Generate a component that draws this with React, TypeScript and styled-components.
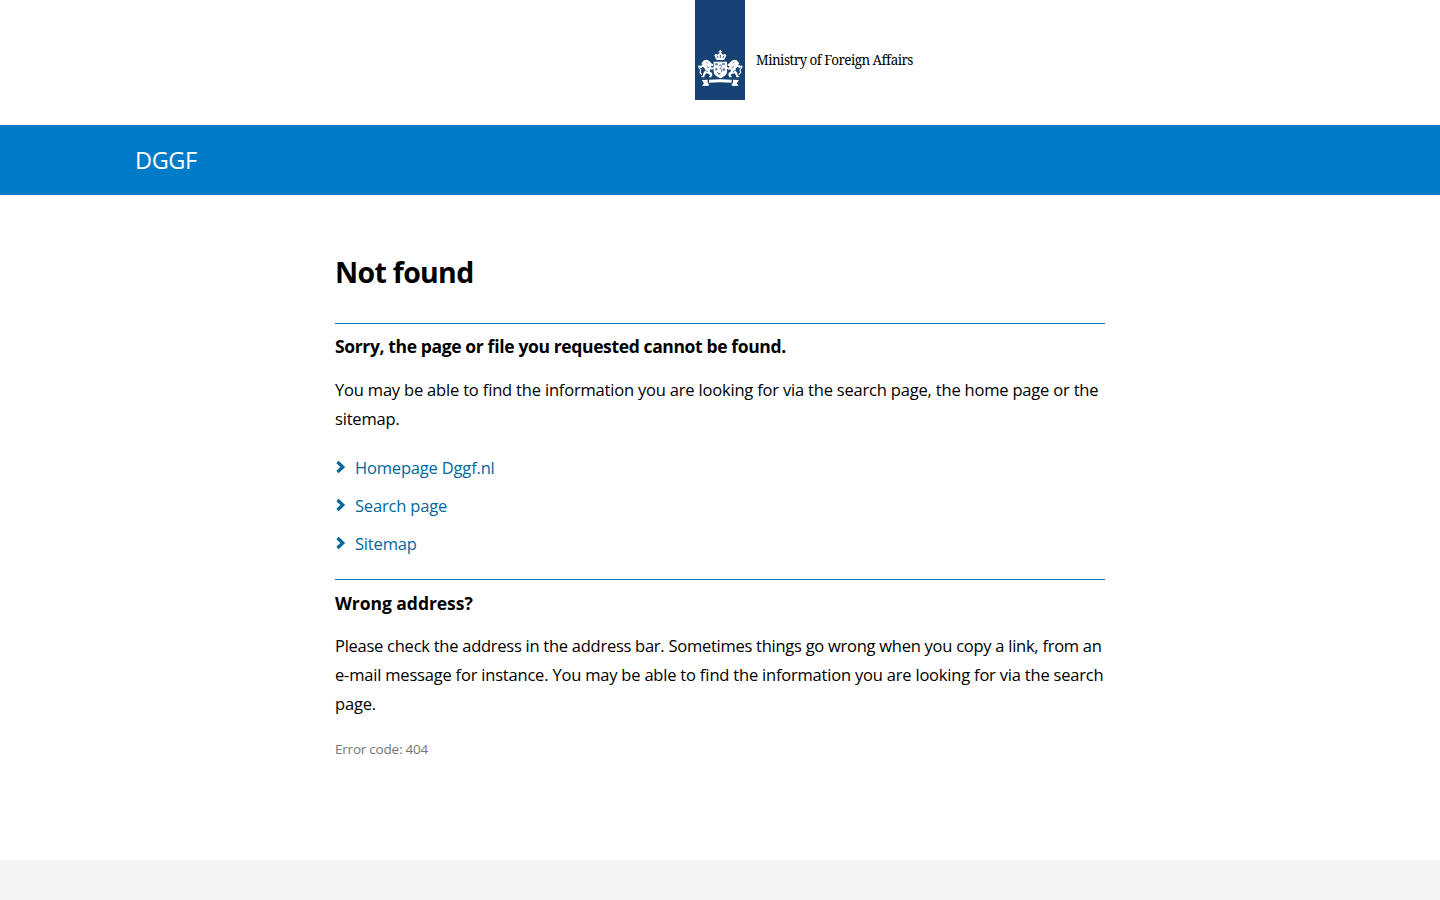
import React from 'react';
import styled, { createGlobalStyle } from 'styled-components';

const GlobalStyle = createGlobalStyle`
  *, *::before, *::after { box-sizing: border-box; }
  body {
    margin: 0;
    background: #fff;
    color: #000;
    font-family: 'Open Sans', 'Noto Sans', sans-serif;
    font-size: 16.5px;
    line-height: 29px;
    font-feature-settings: 'liga' 1;
  }
`;

const Page = styled.div`
  display: flex;
  flex-direction: column;
  height: 900px;
  overflow: hidden;
`;

const Header = styled.header`
  display: flex;
  flex: none;
  align-items: flex-start;
  height: 125px;
  padding-left: 695px;
`;

const Ribbon = styled.svg`
  display: block;
  width: 50px;
  height: 100px;
  background: #154273;
`;

const Ministry = styled.span`
  margin: 50px 0 0 11px;
  font-family: 'Noto Serif', 'DejaVu Serif', serif;
  font-size: 13.5px;
  line-height: 20px;
  letter-spacing: -0.53px;
  white-space: nowrap;
`;

const TitleBar = styled.div`
  display: flex;
  flex: none;
  align-items: center;
  height: 70px;
  padding: 1px 0 0 135px;
  background: #007bc7;
  color: #fff;
  font-size: 23.5px;
  letter-spacing: -0.4px;
`;

const Main = styled.main`
  flex: 1;
  width: 770px;
  margin: 0 auto;
  padding-top: 57px;
`;

const Title = styled.h1`
  margin: 0 0 31px;
  font-size: 28.5px;
  font-weight: 700;
  line-height: 40px;
  letter-spacing: -0.7px;
`;

const Section = styled.section`
  height: 256px;
  padding-top: 9px;
  border-top: 1px solid #007bc7;
`;

const FirstSection = styled(Section)`
  padding-top: 8px;
`;

const Heading = styled.h2<{ $tracking?: number; $gap?: number }>`
  margin: 0 0 ${(p) => p.$gap ?? 13}px;
  font-size: 17.5px;
  font-weight: 700;
  line-height: 29px;
  letter-spacing: ${(p) => p.$tracking ?? 0}px;
`;

const Text = styled.p`
  margin: 0;
  white-space: nowrap;
`;

const Line = styled.span<{ $tracking: number }>`
  display: block;
  letter-spacing: ${(p) => p.$tracking}px;
`;

const Links = styled.ul`
  display: flex;
  flex-direction: column;
  gap: 9px;
  margin: 20px 0 0;
  padding: 0;
  list-style: none;
`;

const LinkItem = styled.li`
  display: flex;
  align-items: center;
`;

const Chevron = styled.svg`
  width: 20px;
  height: 14px;
  margin-top: -1px;
`;

const Link = styled.a`
  color: #01689b;
  letter-spacing: -0.18px;
  text-decoration: none;
`;

const ErrorCode = styled.p`
  margin: 21px 0 0;
  color: #767676;
  font-size: 13.5px;
  line-height: 20px;
  letter-spacing: -0.22px;
`;

const Footer = styled.footer`
  flex: none;
  height: 40px;
  background: #f3f4f6;
`;

const Lion = () => (
  <g>
    <path d="M37 66l5-5 8-2 8 4 6 7 5 3v5l-6-1 2 6 6-2 1 5-6 3-5-1-2 6 7 5 1 6-3 7h-7v-3l4-3-6-5-6-1-5 6-1 6h-9v-3l5-3 1-7 5-7-1-8-5-3-8 2v-4l7-4-4-4z" />
    <path d="M36 104l-6-6 2-8-6-9 1-3 7 4-1-6" fill="none" stroke="#fff" strokeWidth="3.5" />
    <path d="M50 79l8 5M44 90l9 5M49 66l4 4" stroke="#154273" strokeWidth="2" />
  </g>
);

const CoatOfArms = () => (
  <Ribbon viewBox="15 -120 150 300" fill="#fff">
    <path d="M89 30h4v4h3v3h-3v4h-4v-4h-3v-3h3z" />
    <path d="M73 45l5-4 5 3 4-4h8l4 4 5-3 5 4-3 8-4 7H80l-4-7z" />
    <path d="M80 47l4 7M91 44v10M102 47l-4 7" stroke="#154273" strokeWidth="2.5" />
    <path d="M71 65h40v30c0 9-9 15-20 20-11-5-20-11-20-20z" />
    <path d="M77 71h5v4h-5zM98 70h5v4h-5zM77 86h4v4h-4zM100 86h4v5h-4zM86 100h3v3h-3zM86 78l7-4 2 6-5 5 7 5-4 7M81 97l4 2" fill="none" stroke="#154273" strokeWidth="2" />
    <Lion />
    <g transform="translate(182 0) scale(-1 1)"><Lion /></g>
    <path d="M57 119q34-3 68 0v9q-34-3-68 0zM35 120l18-1v9l5 7-5 3-17-1 6-7zM147 120l-18-1v9l-5 7 5 3 17-1-6-7z" />
  </Ribbon>
);

const links = ['Homepage Dggf.nl', 'Search page', 'Sitemap'];

export default function App() {
  return (
    <Page>
      <GlobalStyle />
      <Header>
        <CoatOfArms />
        <Ministry>Ministry of Foreign Affairs</Ministry>
      </Header>
      <TitleBar>DGGF</TitleBar>
      <Main>
        <Title>Not found</Title>
        <FirstSection>
          <Heading $tracking={-0.37} $gap={14}>Sorry, the page or file you requested cannot be found.</Heading>
          <Text>
            <Line $tracking={-0.19}>
              You may be able to find the information you are looking for via the search page, the home page or the
            </Line>
            <Line $tracking={-0.19}>sitemap.</Line>
          </Text>
          <Links>
            {links.map((label) => (
              <LinkItem key={label}>
                <Chevron viewBox="0 0 20 14" fill="none" stroke="#01689b" strokeWidth="3.2">
                  <path d="M2.5 2L7.8 7L2.5 12" />
                </Chevron>
                <Link href="#">{label}</Link>
              </LinkItem>
            ))}
          </Links>
        </FirstSection>
        <Section>
          <Heading $tracking={-0.05}>Wrong address?</Heading>
          <Text>
            <Line $tracking={-0.26}>
              Please check the address in the address bar. Sometimes things go wrong when you copy a link, from an
            </Line>
            <Line $tracking={-0.2}>
              e-mail message for instance. You may be able to find the information you are looking for via the search
            </Line>
            <Line $tracking={-0.19}>page.</Line>
          </Text>
          <ErrorCode>Error code: 404</ErrorCode>
        </Section>
      </Main>
      <Footer />
    </Page>
  );
}
